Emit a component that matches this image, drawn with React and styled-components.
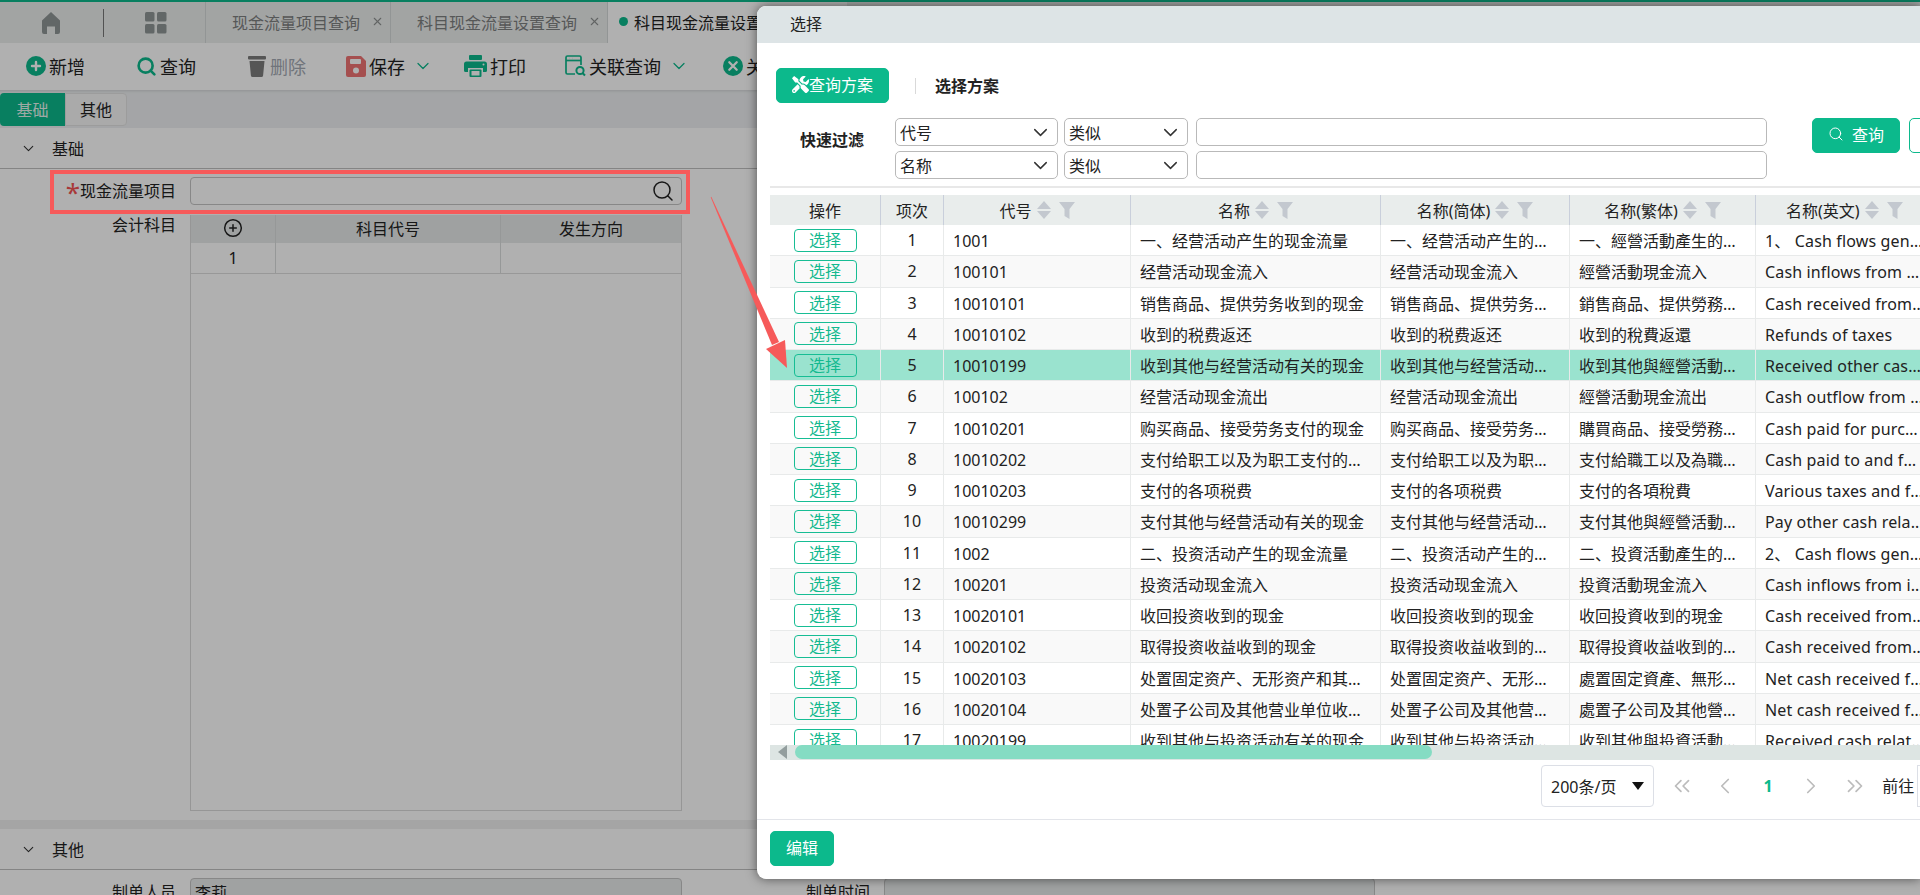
import React from "react";
import styled, { createGlobalStyle } from "styled-components";
import { ChevronDown, ChevronLeft, ChevronRight, ChevronsLeft, ChevronsRight, CirclePlus, Search, X } from "lucide-react";
import { FaTools } from "react-icons/fa";

const GREEN = "#0cb98c";

const GlobalStyle = createGlobalStyle`
html, body { margin: 0; padding: 0; background: #fff; }
body { font-family: "Noto Sans", "Noto Sans CJK SC", sans-serif; font-size: 16px; color: #222; }
* { box-sizing: border-box; }
`;

const Page = styled.div`
position: relative;
width: 1920px;
height: 895px;
overflow: hidden;
background: #fff;
`;

const TopBar = styled.div`
display: flex;
height: 43px;
background: #ebeeed;
border-top: 2px solid ${GREEN};
`;

const HomeCell = styled.div`
display: flex;
align-items: center;
width: 205px;
color: #8a8d8d;
padding-left: 41px;
`;

const VLine = styled.span`
width: 1px;
height: 28px;
background: #777;
margin: 0 41px 0 42px;
`;

const Tab = styled.div`
display: flex;
align-items: center;
width: ${props => props.$w}px;
padding-left: ${props => props.$active ? 11 : 26}px;
padding-bottom: 2px;
color: ${props => props.$active ? "#222" : "#7d8080"};
background: ${props => props.$active ? "#fff" : "transparent"};
border-left: 1px solid #d4d8d8;
white-space: nowrap;
svg { margin-left: 11px; color: #8f9292; }
`;

const Dot = styled.i`
width: 9px;
height: 9px;
border-radius: 50%;
background: ${GREEN};
margin-right: 6px;
`;

const Toolbar = styled.div`
display: flex;
align-items: center;
height: 47px;
padding-left: 26px;
background: #fff;
font-size: 18px;
`;

const ToolItem = styled.div`
display: flex;
align-items: center;
gap: 3px;
padding-bottom: 1px;
width: ${props => props.$w}px;
white-space: nowrap;
color: ${props => props.$off ? "#a3a9b2" : "#222"};
> svg:last-child:not(:first-child) { margin-left: 5px; color: ${GREEN}; }
`;

const TabBand = styled.div`
display: flex;
align-items: center;
height: 38px;
background: #eef0f2;
box-shadow: inset 0 3px 3px -2px rgba(0, 0, 0, .12);
`;

const FormTab = styled.div`
display: flex;
align-items: center;
justify-content: center;
height: 33px;
padding-bottom: 1px;
width: ${props => props.$w}px;
color: ${props => props.$active ? "#e6f5f0" : "#222"};
background: ${props => props.$active ? GREEN : "#f6f6f6"};
border-radius: ${props => props.$active ? "4px 0 0 4px" : "0 4px 4px 0"};
border: ${props => props.$active ? "none" : "1px solid #e2e2e2"};
`;

const SectionHead = styled.div`
display: flex;
align-items: center;
height: 41px;
padding-left: 20px;
gap: 15px;
border-bottom: 1px solid #c0c0c0;
svg { color: #333; }
`;

const Form = styled.div`
display: grid;
grid-template-columns: 176px 492px 174px 491px;
column-gap: 14px;
padding-top: 8px;
align-items: start;
`;

const Label = styled.label`
text-align: right;
line-height: 28px;
white-space: nowrap;
`;

const Star = styled.b`
color: #f35252;
font-weight: 400;
font-size: 26px;
line-height: 0;
vertical-align: -5px;
`;

const Field = styled.div`
display: flex;
align-items: center;
justify-content: space-between;
height: 28px;
padding: 0 6px 0 4px;
background: ${props => props.$off ? "#e8ebeb" : "transparent"};
border: 1px solid #c4c4c4;
border-radius: 4px;
svg { color: #222; }
`;

const Gap = styled.div`
height: 10px;
grid-column: 1 / -1;
`;

const SubLabel = styled(Label)`
line-height: 21px;
`;

const SubTable = styled.div`
height: 596px;
border: 1px solid #d9d9d9;
border-top: none;
`;

const SubRow = styled.div`
display: grid;
grid-template-columns: 85px 225px 1fr;
height: ${props => props.$head ? 28 : 31}px;
background: ${props => props.$head ? "#e6eaea" : "#fff"};
border-bottom: ${props => props.$head ? "none" : "1px solid #dcdcdc"};
> div {
    display: flex;
    align-items: center;
    justify-content: center;
    padding-bottom: ${props => props.$head ? 2 : 0}px;
    border-right: 1px solid #d9dcdc;
}
> div:last-child { border-right: none; }
`;

const Band = styled.div`
height: 9px;
margin-top: 9px;
background: #f0f0f0;
`;

const Overlay = styled.div`
position: absolute;
inset: 0;
background: rgba(0, 0, 0, .31);
`;

const Modal = styled.div`
position: absolute;
left: 757px;
top: 6px;
right: 0;
height: 873px;
overflow: hidden;
background: #fff;
border-radius: 9px 0 0 9px;
box-shadow: 0 0 11px rgba(0, 0, 0, .55);
`;

const ModalHead = styled.div`
display: flex;
align-items: center;
height: 37px;
padding: 0 0 3px 33px;
background: #dde4e6;
`;

const PlanRow = styled.div`
display: flex;
align-items: center;
height: 35px;
margin: 25px 0 15px 19px;
`;

const Btn = styled.button`
display: inline-flex;
align-items: center;
justify-content: center;
flex: none;
width: ${props => props.$w}px;
height: 35px;
padding: 0 0 3px;
gap: ${props => props.$gap || 0}px;
font: inherit;
color: ${props => props.$ghost ? GREEN : "#fff"};
background: ${props => props.$ghost ? "#fff" : GREEN};
border: 1px solid ${GREEN};
border-radius: 5px;
`;

const PlanLine = styled.span`
width: 1px;
height: 16px;
background: #d9d9d9;
margin: 0 19px 0 26px;
`;

const Strong = styled.span`
font-weight: 700;
white-space: nowrap;
padding-bottom: 2px;
`;

const FilterWrap = styled.div`
display: flex;
align-items: flex-start;
padding-left: 43px;
height: 61px;
`;

const FilterTitle = styled(Strong)`
flex: none;
width: 95px;
line-height: 44px;
`;

const FilterRows = styled.div`
flex: none;
display: grid;
grid-template-columns: 163px 124px 573px;
grid-auto-rows: 28px;
column-gap: 6px;
row-gap: 5px;
`;

const Select = styled.div`
display: flex;
align-items: center;
justify-content: space-between;
height: 28px;
padding: 0 5px 0 4px;
border: 1px solid #b9b9b9;
border-radius: 5px;
svg { color: #333; }
`;

const TextBox = styled(Select)`
margin-left: 2px;
`;

const FilterBtns = styled.div`
flex: none;
display: flex;
gap: 9px;
margin-left: 45px;
`;

const Rule = styled.div`
height: 2px;
margin: 7px 0 7px 13px;
background: #e8e8e8;
`;

const TableWrap = styled.div`
margin-left: 13px;
`;

const COLS = "111px 63px 187px 250px 189px 186px 178px";

const HeadRow = styled.div`
display: grid;
grid-template-columns: ${COLS};
height: 30px;
background: #e9edec;
`;

const HeadCell = styled.div`
display: flex;
align-items: center;
justify-content: center;
gap: 5px;
white-space: nowrap;
border-right: 1px solid #c9cfdb;
&:last-child { border-right: none; justify-content: flex-start; padding-left: 30px; }
`;

const TableBody = styled.div`
height: 520px;
overflow: hidden;
`;

const Row = styled.div`
display: grid;
grid-template-columns: ${COLS};
height: 31.25px;
background: ${props => props.$selected ? "#9ae3cf" : props.$even ? "#f9f9f9" : "#fff"};
border-bottom: 1px solid #e8eaea;
`;

const Cell = styled.div`
display: ${props => props.$center ? "flex" : "block"};
align-items: center;
justify-content: center;
padding: ${props => props.$center ? 0 : "0 9px"};
line-height: 32px;
white-space: nowrap;
overflow: hidden;
text-overflow: ellipsis;
border-right: 1px solid #e8eaea;
&:last-child { border-right: none; letter-spacing: .15px; }
`;

const PickBtn = styled.button`
width: 63px;
height: 23px;
padding: 0;
font: inherit;
line-height: 20px;
color: #14b98f;
background: transparent;
border: 1px solid #17bd94;
border-radius: 4px;
`;

const ScrollBar = styled.div`
display: flex;
align-items: flex-start;
height: 15px;
background: #dde5e3;
`;

const ScrollArrow = styled.div`
display: flex;
align-items: center;
justify-content: center;
width: 25px;
height: 14px;
`;

const ScrollThumb = styled.div`
width: 637px;
height: 14px;
border-radius: 7px;
background: #85dcc3;
`;

const Pager = styled.div`
display: flex;
align-items: flex-start;
height: 60px;
padding: 5px 0 0 784px;
border-bottom: 1px solid #e3e5ea;
white-space: nowrap;
`;

const SizeSelect = styled.div`
display: flex;
align-items: center;
justify-content: space-between;
flex: none;
width: 113px;
height: 42px;
padding: 0 9px;
border: 1px solid #dcdfe6;
border-radius: 4px;
`;

const PageBtn = styled.div`
display: flex;
align-items: center;
justify-content: center;
flex: none;
width: 43.25px;
height: 42px;
color: ${props => props.$active ? GREEN : "#bcbcbc"};
font-weight: ${props => props.$active ? 700 : 400};
`;

const PageBtns = styled.div`
flex: none;
display: flex;
margin-left: 6px;
`;

const JumpText = styled.span`
margin-left: 6px;
line-height: 42px;
flex: none;
`;

const JumpBox = styled.div`
flex: none;
width: 50px;
height: 42px;
margin-left: 3px;
border: 1px solid #dcdfe6;
`;

const Footer = styled.div`
padding: 11px 0 0 13px;
`;

const Marker = styled.div`
position: absolute;
left: 50px;
top: 170px;
width: 640px;
height: 44px;
border: 4px solid #f65a5a;
`;

const ArrowLayer = styled.svg`
position: absolute;
left: 0;
top: 0;
pointer-events: none;
`;

const rows = [
  ["1001", "一、经营活动产生的现金流量", "一、經營活動產生的現金流量", "1、 Cash flows generated from operating"],
  ["100101", "经营活动现金流入", "經營活動現金流入", "Cash inflows from operating activities"],
  ["10010101", "销售商品、提供劳务收到的现金", "銷售商品、提供勞務收到的現金", "Cash received from sales of goods"],
  ["10010102", "收到的税费返还", "收到的稅費返還", "Refunds of taxes"],
  ["10010199", "收到其他与经营活动有关的现金", "收到其他與經營活動有關的現金", "Received other cash related to operating"],
  ["100102", "经营活动现金流出", "經營活動現金流出", "Cash outflow from operating activities"],
  ["10010201", "购买商品、接受劳务支付的现金", "購買商品、接受勞務支付的現金", "Cash paid for purchases of goods"],
  ["10010202", "支付给职工以及为职工支付的现金", "支付給職工以及為職工支付的現金", "Cash paid to and for employees"],
  ["10010203", "支付的各项税费", "支付的各項稅費", "Various taxes and fees paid"],
  ["10010299", "支付其他与经营活动有关的现金", "支付其他與經營活動有關的現金", "Pay other cash related to operating"],
  ["1002", "二、投资活动产生的现金流量", "二、投資活動產生的現金流量", "2、 Cash flows generated from investing"],
  ["100201", "投资活动现金流入", "投資活動現金流入", "Cash inflows from investing activities"],
  ["10020101", "收回投资收到的现金", "收回投資收到的現金", "Cash received from investment recovery"],
  ["10020102", "取得投资收益收到的现金", "取得投資收益收到的現金", "Cash received from investment income"],
  ["10020103", "处置固定资产、无形资产和其他长期资产", "處置固定資產、無形資產和其他長期資產", "Net cash received from disposal"],
  ["10020104", "处置子公司及其他营业单位收到的现金", "處置子公司及其他營業單位收到的現金", "Net cash received from subsidiaries"],
  ["10020199", "收到其他与投资活动有关的现金", "收到其他與投資活動有關的現金", "Received cash related to investing"],
];

const heads = ["代号", "名称", "名称(简体)", "名称(繁体)", "名称(英文)"];

const SortIcons = () => (
  <svg width="38" height="20" viewBox="0 0 38 20" fill="#c3c8cf">
    <path d="M7 1l7 8H0zM7 19L0 11h14z" />
    <path d="M22 2h16l-5.500 7v10L27.500 16V9z" />
  </svg>
);

const HomeIcon = () => (
  <svg width="20" height="22" viewBox="0 0 20 22" fill="#8f9696">
    <path d="M10 0l9 8.500V20a2 2 0 0 1-2 2h-3v-7.500H6V22H3a2 2 0 0 1-2-2V8.500z" />
  </svg>
);

const GridIcon = () => (
  <svg width="22" height="22" viewBox="0 0 22 22" fill="#8f9696">
    <rect width="9.500" height="9.500" rx="1.500" />
    <rect x="12" width="9.500" height="9.500" rx="1.500" />
    <rect y="12" width="9.500" height="9.500" rx="1.500" />
    <rect x="12" y="12" width="9.500" height="9.500" rx="1.500" />
  </svg>
);

const AddIcon = () => (
  <svg width="20" height="20" viewBox="0 0 20 20">
    <circle cx="10" cy="10" r="10" fill={GREEN} />
    <path d="M10 6v8M6 10h8" stroke="#fff" strokeWidth="2.400" strokeLinecap="round" />
  </svg>
);

const TrashIcon = () => (
  <svg width="20" height="21" viewBox="0 0 20 21" fill="#7b7b7b">
    <rect x="1" y="0" width="18" height="3.400" rx="1" />
    <path d="M2.500 5h15l-1.400 14.400a1.800 1.800 0 0 1-1.800 1.600H5.700a1.800 1.800 0 0 1-1.800-1.600z" />
  </svg>
);

const SaveIcon = () => (
  <svg width="20" height="21" viewBox="0 0 20 21">
    <path d="M2 0h13l5 5v14a2 2 0 0 1-2 2H2a2 2 0 0 1-2-2V2a2 2 0 0 1 2-2z" fill="#ef7373" />
    <rect x="4" y="3" width="11" height="5" rx="1" fill="#fff" />
    <circle cx="10" cy="14.500" r="3" fill="#fff" />
  </svg>
);

const PrintIcon = () => (
  <svg width="23" height="22" viewBox="0 0 23 22" fill={GREEN}>
    <rect x="5" y="0" width="13" height="5" rx="1" />
    <path d="M2.500 6.500h18a2.500 2.500 0 0 1 2.500 2.500v6.500a1.500 1.500 0 0 1-1.500 1.500H19v-4H4v4H1.500A1.500 1.500 0 0 1 0 15.500V9a2.500 2.500 0 0 1 2.500-2.500z" />
    <rect x="5.500" y="14.500" width="12" height="7.500" rx="1" />
    <circle cx="19.500" cy="9.500" r="1" fill="#fff" />
    <rect x="7.500" y="16" width="8" height="4.500" fill="#fff" />
  </svg>
);

const RelateIcon = () => (
  <svg width="21" height="22" viewBox="0 0 21 22" fill="none" stroke={GREEN} strokeWidth="1.700">
    <path d="M10 19H2.500A1.500 1.500 0 0 1 1 17.500v-15A1.500 1.500 0 0 1 2.500 1h12A1.500 1.500 0 0 1 16 2.500V10" />
    <path d="M1 5.500h15" />
    <path d="M4 3.300h.1M7 3.300h.1" />
    <circle cx="15" cy="15.500" r="3.600" strokeWidth="2" />
    <path d="M17.700 18.200L20 20.500" strokeWidth="2" />
  </svg>
);

const CloseIcon = () => (
  <svg width="20" height="20" viewBox="0 0 20 20">
    <circle cx="10" cy="10" r="10" fill={GREEN} />
    <path d="M6.300 6.300l7.400 7.400M13.700 6.300l-7.400 7.400" stroke="#fff" strokeWidth="2.300" strokeLinecap="round" />
  </svg>
);

const App = () => (
  <Page>
    <GlobalStyle />
    <TopBar>
      <HomeCell>
        <HomeIcon />
        <VLine />
        <GridIcon />
      </HomeCell>
      <Tab $w={185}>现金流量项目查询<X size={13} /></Tab>
      <Tab $w={217}>科目现金流量设置查询<X size={13} /></Tab>
      <Tab $w={240} $active><Dot />科目现金流量设置</Tab>
    </TopBar>
    <Toolbar>
      <ToolItem $w={110}><AddIcon />新增</ToolItem>
      <ToolItem $w={111}><Search size={21} color={GREEN} strokeWidth={3} />查询</ToolItem>
      <ToolItem $w={99} $off><TrashIcon />删除</ToolItem>
      <ToolItem $w={118}><SaveIcon />保存<ChevronDown size={20} strokeWidth={1.5} /></ToolItem>
      <ToolItem $w={101}><PrintIcon />打印</ToolItem>
      <ToolItem $w={158}><RelateIcon />关联查询<ChevronDown size={20} strokeWidth={1.5} /></ToolItem>
      <ToolItem $w={60}><CloseIcon />关闭</ToolItem>
    </Toolbar>
    <TabBand>
      <FormTab $w={65} $active>基础</FormTab>
      <FormTab $w={62}>其他</FormTab>
    </TabBand>
    <SectionHead><ChevronDown size={17} strokeWidth={1.5} />基础</SectionHead>
    <Form>
      <Label><Star>*</Star>现金流量项目</Label>
      <Field><span /><Search size={24} strokeWidth={1.5} /></Field>
      <span />
      <span />
      <Gap />
      <SubLabel>会计科目</SubLabel>
      <SubTable>
        <SubRow $head>
          <div><CirclePlus size={20} strokeWidth={1.8} /></div>
          <div>科目代号</div>
          <div>发生方向</div>
        </SubRow>
        <SubRow>
          <div>1</div>
          <div />
          <div />
        </SubRow>
      </SubTable>
    </Form>
    <Band />
    <SectionHead><ChevronDown size={17} strokeWidth={1.5} />其他</SectionHead>
    <Form>
      <Label>制单人员</Label>
      <Field $off>李莉</Field>
      <Label>制单时间</Label>
      <Field $off />
    </Form>

    <Overlay />

    <Modal>
      <ModalHead>选择</ModalHead>
      <PlanRow>
        <Btn $w={113}><FaTools size={17} />查询方案</Btn>
        <PlanLine />
        <Strong>选择方案</Strong>
      </PlanRow>
      <FilterWrap>
        <FilterTitle>快速过滤</FilterTitle>
        <FilterRows>
          <Select>代号<ChevronDown size={23} strokeWidth={1.5} /></Select>
          <Select>类似<ChevronDown size={23} strokeWidth={1.5} /></Select>
          <TextBox />
          <Select>名称<ChevronDown size={23} strokeWidth={1.5} /></Select>
          <Select>类似<ChevronDown size={23} strokeWidth={1.5} /></Select>
          <TextBox />
        </FilterRows>
        <FilterBtns>
          <Btn $w={88} $gap={8}><Search size={16} strokeWidth={1.5} />查询</Btn>
          <Btn $w={88} $ghost>重置</Btn>
        </FilterBtns>
      </FilterWrap>
      <Rule />
      <TableWrap>
        <HeadRow>
          <HeadCell>操作</HeadCell>
          <HeadCell>项次</HeadCell>
          {heads.map(h => <HeadCell key={h}>{h}<SortIcons /></HeadCell>)}
        </HeadRow>
        <TableBody>
          {rows.map((r, i) => (
            <Row key={r[0]} $even={i % 2 === 1} $selected={i === 4}>
              <Cell $center><PickBtn>选择</PickBtn></Cell>
              <Cell $center>{i + 1}</Cell>
              <Cell>{r[0]}</Cell>
              <Cell>{r[1]}</Cell>
              <Cell>{r[1]}</Cell>
              <Cell>{r[2]}</Cell>
              <Cell>{r[3]}</Cell>
            </Row>
          ))}
        </TableBody>
        <ScrollBar>
          <ScrollArrow>
            <svg width="9" height="14" viewBox="0 0 9 14" fill="#939e9e"><path d="M9 0v14L0 7z" /></svg>
          </ScrollArrow>
          <ScrollThumb />
        </ScrollBar>
      </TableWrap>
      <Pager>
        <SizeSelect>
          200条/页
          <svg width="12" height="8" viewBox="0 0 12 8" fill="#111"><path d="M0 0h12L6 8z" /></svg>
        </SizeSelect>
        <PageBtns>
          <PageBtn><ChevronsLeft size={26} strokeWidth={1.6} /></PageBtn>
          <PageBtn><ChevronLeft size={26} strokeWidth={1.6} /></PageBtn>
          <PageBtn $active>1</PageBtn>
          <PageBtn><ChevronRight size={26} strokeWidth={1.6} /></PageBtn>
          <PageBtn><ChevronsRight size={26} strokeWidth={1.6} /></PageBtn>
        </PageBtns>
        <JumpText>前往</JumpText>
        <JumpBox />
      </Pager>
      <Footer>
        <Btn $w={64}>编辑</Btn>
      </Footer>
    </Modal>

    <Marker />
    <ArrowLayer width="1920" height="895" viewBox="0 0 1920 895" fill="#f65a5a">
      <path d="M710.700 197.200L711.300 196.800L779 342L772 345z" />
      <path d="M787 368L766 349L785 340z" />
    </ArrowLayer>
  </Page>
);

export default App;
